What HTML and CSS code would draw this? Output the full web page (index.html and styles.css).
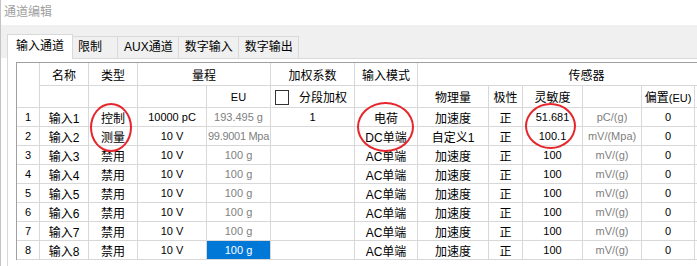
FILE: index.html
```html
<!DOCTYPE html>
<html lang="zh-CN">
<head>
    <meta charset="UTF-8">
    <title>通道编辑</title>
    <link rel="stylesheet" href="styles.css">
</head>
<body>
    <div class="window">
        <div class="title">通道编辑</div>
        <div class="tabs">
            <div class="tab active">输入通道</div>
            <div class="tab wide">限制</div>
            <div class="tab">AUX通道</div>
            <div class="tab">数字输入</div>
            <div class="tab">数字输出</div>
        </div>
        <div class="panel">
            <div class="grid-wrap">
                <table class="grid">
                    <colgroup>
                        <col style="width:23px"><col style="width:49px"><col style="width:49px">
                        <col style="width:69px"><col style="width:64px"><col style="width:84px">
                        <col style="width:63px"><col style="width:71px"><col style="width:34px">
                        <col style="width:60px"><col style="width:59px"><col style="width:53px">
                        <col style="width:60px">
                    </colgroup>
                    <tr class="head1">
                        <th rowspan="2"></th>
                        <th>名称</th>
                        <th>类型</th>
                        <th colspan="2">量程</th>
                        <th>加权系数</th>
                        <th>输入模式</th>
                        <th colspan="6" class="open">传感器</th>
                    </tr>
                    <tr class="head2">
                        <th></th>
                        <th></th>
                        <th></th>
                        <th class="n">EU</th>
                        <th class="check"><span class="box"></span>分段加权</th>
                        <th></th>
                        <th>物理量</th>
                        <th>极性</th>
                        <th>灵敏度</th>
                        <th></th>
                        <th>偏置<span class="n">(EU)</span></th>
                        <th></th>
                    </tr>
                    <tr>
                        <td class="n">1</td><td>输入1</td><td>控制</td>
                        <td class="n">10000 pC</td><td class="n dim">193.495 g</td>
                        <td class="n">1</td><td>电荷</td><td>加速度</td><td>正</td>
                        <td class="n">51.681</td><td class="n dim">pC/(g)</td><td class="n">0</td><td></td>
                    </tr>
                    <tr>
                        <td class="n">2</td><td>输入2</td><td>测量</td>
                        <td class="n">10 V</td><td class="n dim tight">99.9001 Mpa</td>
                        <td></td><td>DC单端</td><td>自定义1</td><td>正</td>
                        <td class="n">100.1</td><td class="n dim">mV/(Mpa)</td><td class="n">0</td><td></td>
                    </tr>
                    <tr>
                        <td class="n">3</td><td>输入3</td><td>禁用</td>
                        <td class="n">10 V</td><td class="n dim">100 g</td>
                        <td></td><td>AC单端</td><td>加速度</td><td>正</td>
                        <td class="n">100</td><td class="n dim">mV/(g)</td><td class="n">0</td><td></td>
                    </tr>
                    <tr>
                        <td class="n">4</td><td>输入4</td><td>禁用</td>
                        <td class="n">10 V</td><td class="n dim">100 g</td>
                        <td></td><td>AC单端</td><td>加速度</td><td>正</td>
                        <td class="n">100</td><td class="n dim">mV/(g)</td><td class="n">0</td><td></td>
                    </tr>
                    <tr>
                        <td class="n">5</td><td>输入5</td><td>禁用</td>
                        <td class="n">10 V</td><td class="n dim">100 g</td>
                        <td></td><td>AC单端</td><td>加速度</td><td>正</td>
                        <td class="n">100</td><td class="n dim">mV/(g)</td><td class="n">0</td><td></td>
                    </tr>
                    <tr>
                        <td class="n">6</td><td>输入6</td><td>禁用</td>
                        <td class="n">10 V</td><td class="n dim">100 g</td>
                        <td></td><td>AC单端</td><td>加速度</td><td>正</td>
                        <td class="n">100</td><td class="n dim">mV/(g)</td><td class="n">0</td><td></td>
                    </tr>
                    <tr>
                        <td class="n">7</td><td>输入7</td><td>禁用</td>
                        <td class="n">10 V</td><td class="n dim">100 g</td>
                        <td></td><td>AC单端</td><td>加速度</td><td>正</td>
                        <td class="n">100</td><td class="n dim">mV/(g)</td><td class="n">0</td><td></td>
                    </tr>
                    <tr>
                        <td class="n">8</td><td>输入8</td><td>禁用</td>
                        <td class="n">10 V</td><td class="n selected">100 g</td>
                        <td></td><td>AC单端</td><td>加速度</td><td>正</td>
                        <td class="n">100</td><td class="n dim">mV/(g)</td><td class="n">0</td><td></td>
                    </tr>
                </table>
                <!-- annotation marks -->
                <div class="mark mark-type"></div>
                <div class="mark mark-mode"></div>
                <div class="mark mark-sens"></div>
            </div>
        </div>
    </div>
</body>
</html>
```

FILE: styles.css
```css
body {
    margin: 0;
    overflow: hidden;
    background-color: #fff;
    font-family: "Liberation Sans", "Noto Sans CJK SC", sans-serif;
    font-size: 12px;
    color: #000;
}
.window {
    width: 697px;
    height: 266px;
    border-left: 1px solid #c4c4c4;
    box-sizing: border-box;
    overflow: hidden;
}
.title {
    height: 25px;
    line-height: 24px;
    padding-left: 3px;
    color: #a0a0a0;
}
.tabs {
    display: flex;
    align-items: flex-end;
    height: 33px;
    padding-left: 6px;
    background-color: #f0f0f0;
}
.tab {
    height: 21px;
    line-height: 21px;
    padding: 0 5px 0 6px;
    margin-left: -1px;
    border: 1px solid #d9d9d9;
    border-bottom: none;
    background-color: #f0f0f0;
}
.tab.wide {
    min-width: 34px;
}
.tab.active {
    position: relative;
    z-index: 1;
    height: 24px;
    line-height: 22px;
    margin-left: 0;
    margin-bottom: -1px;
    margin-right: -1px;
    padding: 0 8px;
    background-color: #fff;
}
.panel {
    margin-left: 6px;
    padding: 3px 0 0 8px;
    height: 210px;
    border-left: 1px solid #d9d9d9;
    border-top: 1px solid #d9d9d9;
    background-color: #fff;
}
.grid-wrap {
    position: relative;
    width: 738px;
    border-top: 1px solid #a0a0a0;
    border-left: 1px solid #a0a0a0;
}
.grid {
    table-layout: fixed;
    width: 738px;
    border-collapse: separate;
    border-spacing: 0;
}
.grid th, .grid td {
    padding: 0;
    border-right: 1px solid #d8d8d8;
    border-bottom: 1px solid #d8d8d8;
    text-align: center;
    white-space: nowrap;
    overflow: hidden;
    font-weight: normal;
}
.grid .open {
    border-right: none;
}
.grid tr {
    height: 19px;
}
.grid .head1 {
    height: 23px;
}
.grid .head2 {
    height: 22px;
}
.n {
    font-size: 11px;
}
.tight {
    letter-spacing: -0.3px;
}
.dim {
    color: #808080;
}
.selected {
    background-color: #0078d7;
    color: #fff;
}
.grid .check {
    text-align: left;
    padding-left: 4px;
}
.box {
    display: inline-block;
    width: 12px;
    height: 13px;
    margin-right: 10px;
    border: 1px solid #333;
    vertical-align: -3px;
    background-color: #fff;
}
.mark {
    position: absolute;
    border: 2px solid #e5262c;
    border-radius: 50%;
    box-sizing: border-box;
}
.mark-type {
    left: 73px;
    top: 40px;
    width: 42px;
    height: 49px;
}
.mark-mode {
    left: 340px;
    top: 39px;
    width: 57px;
    height: 50px;
}
.mark-sens {
    left: 508px;
    top: 40px;
    width: 51px;
    height: 46px;
}
```
